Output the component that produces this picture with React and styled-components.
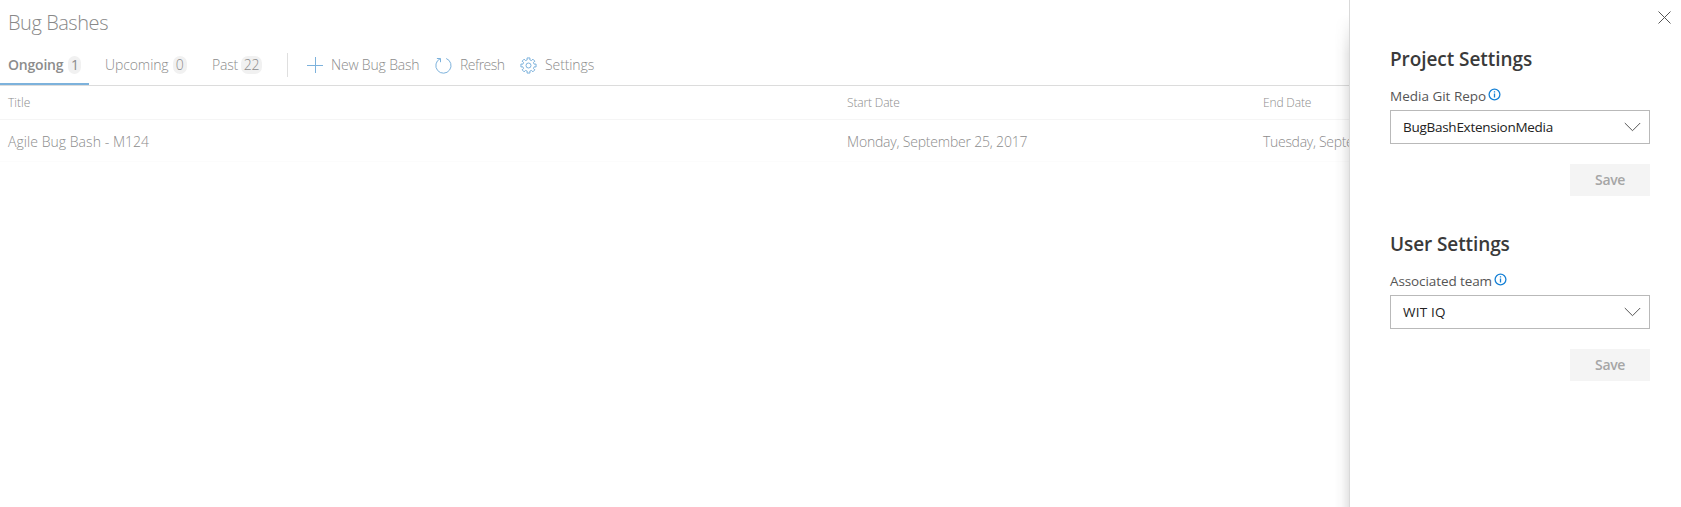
import React from "react";
import styled, { createGlobalStyle } from "styled-components";

const Global = createGlobalStyle`
  *, *::before, *::after { box-sizing: border-box; }
  html, body { margin: 0; background: #fff; overflow: hidden; }
  body { font-family: "Open Sans", "Noto Sans", sans-serif; font-size: 14px; }
`;

const Shell = styled.div`
  display: flex;
  width: 100%;
  height: 507px;
  overflow: hidden;
`;

const Hub = styled.main`
  flex: 1;
  min-width: 0;
  overflow: hidden;
  color: #8c8c8c;
`;

const Text = styled.span`
  display: block;
  font-size: ${(p) => p.$size || 14}px;
  font-weight: ${(p) => p.$weight || 300};
  letter-spacing: ${(p) => p.$track || 0}px;
  line-height: 20px;
  white-space: nowrap;
`;

const HubTitle = styled.h1`
  margin: 0;
  height: 48px;
  padding: 8px 0 0 8px;
  font-size: 20px;
  font-weight: 300;
  line-height: 30px;
  letter-spacing: -0.45px;
  color: #888;
`;

const Toolbar = styled.div`
  display: flex;
  height: 38px;
  border-bottom: 1px solid #dcdcdc;
`;

const Tab = styled.div`
  display: flex;
  align-items: center;
  gap: ${(p) => p.$gap}px;
  width: ${(p) => p.$width}px;
  padding: 0 0 ${(p) => (p.$active ? 2 : 3)}px ${(p) => (p.$active ? 8 : 16)}px;
  border-bottom: ${(p) => (p.$active ? "2px solid #7db2dc" : "0")};
`;

const Badge = styled.span`
  width: ${(p) => p.$width}px;
  height: 18px;
  border-radius: 7px;
  background: #f1f1f1;
  text-align: center;
  font-weight: ${(p) => (p.$bold ? 400 : 300)};
  line-height: 18px;
  letter-spacing: -0.3px;
`;

const Separator = styled.div`
  width: 1px;
  height: 24px;
  margin: 5px 19px 0 0;
  background: #dfdfdf;
`;

const Command = styled.div`
  display: flex;
  align-items: center;
  gap: 8px;
  width: ${(p) => p.$width}px;
  padding-bottom: 3px;
`;

const Icon = styled.svg`
  display: block;
  flex: none;
  fill: none;
  stroke: ${(p) => p.$color || "#7db2dc"};
  stroke-width: ${(p) => p.$stroke || 1};
`;

const Row = styled.div`
  display: grid;
  grid-template-columns: 839px 416px 400px;
  align-items: center;
  height: ${(p) => p.$height}px;
  padding: ${(p) => p.$top || 0}px 0 0 8px;
  border-bottom: 1px solid ${(p) => p.$line};
`;

const Panel = styled.aside`
  position: relative;
  width: 332px;
  flex: none;
  padding: 11px 31px 0 40px;
  border-left: 1px solid #d9d9d9;
  background: #fff;
  color: #333;
  &::before {
    content: "";
    position: absolute;
    top: 14px;
    bottom: -30px;
    left: -16px;
    width: 15px;
    background: linear-gradient(to right, rgba(0,0,0,0), rgba(0,0,0,0.025) 50%, rgba(0,0,0,0.1));
    mask-image: linear-gradient(to bottom, transparent, #000 40px);
  }
`;

const CloseRow = styled.div`
  display: flex;
  justify-content: flex-end;
  height: 33px;
  margin-right: -21px;
`;

const Group = styled.section`
  height: 185px;
`;

const Heading = styled.h2`
  margin: 0;
  height: 41px;
  font-size: 19px;
  font-weight: 600;
  line-height: 30px;
  letter-spacing: ${(p) => p.$track}px;
  white-space: nowrap;
  color: #3a3a3a;
`;

const Label = styled.div`
  display: flex;
  align-items: center;
  gap: 2px;
  height: 25px;
  padding-bottom: 3px;
  color: #555;
  svg { margin-bottom: 3px; }
`;

const Select = styled.div`
  display: flex;
  align-items: center;
  justify-content: space-between;
  height: 34px;
  padding: 0 8px 0 12px;
  border: 1px solid #b9b9b9;
  color: #222;
`;

const SaveButton = styled.button`
  display: block;
  width: 80px;
  height: 32px;
  margin: 20px 0 0 auto;
  padding: 0;
  border: 0;
  background: #f4f4f4;
  color: #a6a6a6;
  font: 600 14px/32px "Open Sans", "Noto Sans", sans-serif;
  letter-spacing: -0.4px;
`;

const PlusIcon = () => (
  <Icon width="16" height="16"><path d="M0 8.5H16M8.5 0V16" /></Icon>
);

const RefreshIcon = () => (
  <Icon width="17" height="17">
    <path d="M11.2 1.5A7.6 7.6 0 1 1 5.2 1.7M1.9 1.5H5.5V5.2" />
  </Icon>
);

const teeth = Array.from({ length: 8 }, (_, i) => {
  const at = (radius, deg) => {
    const a = ((i * 45 + deg) * Math.PI) / 180;
    return `${(8.5 + radius * Math.cos(a)).toFixed(2)} ${(8.5 + radius * Math.sin(a)).toFixed(2)}`;
  };
  return `${at(5.8, -13)}L${at(7.7, -11)}L${at(7.7, 11)}L${at(5.8, 13)}`;
}).join("L");

const GearIcon = () => (
  <Icon width="17" height="17">
    <path d={`M${teeth}Z`} />
    <circle cx="8.5" cy="8.5" r="2.5" />
  </Icon>
);

const InfoIcon = () => (
  <Icon width="13" height="13" $color="#1681d6" $stroke={1.3}>
    <circle cx="6.5" cy="6.5" r="5.4" />
    <path d="M6.5 5.5V9.5M6.5 3.3V4.5" />
  </Icon>
);

const ChevronIcon = () => (
  <Icon width="17" height="10" $color="#555"><path d="M.8 1L8.5 8.7L16.2 1" /></Icon>
);

const CloseIcon = () => (
  <Icon width="13" height="13" $color="#555"><path d="M.5 .5L12.5 12.5M12.5 .5L.5 12.5" /></Icon>
);

const SettingsGroup = ({ title, titleTrack, label, labelTrack, value, valueTrack }) => (
  <Group>
    <Heading $track={titleTrack}>{title}</Heading>
    <Label>
      <Text $weight={400} $size={13.5} $track={labelTrack}>{label}</Text>
      <InfoIcon />
    </Label>
    <Select>
      <Text $weight={400} $size={13.5} $track={valueTrack}>{value}</Text>
      <ChevronIcon />
    </Select>
    <SaveButton>Save</SaveButton>
  </Group>
);

export default function App() {
  return (
    <Shell>
      <Global />
      <Hub>
        <HubTitle>Bug Bashes</HubTitle>
        <Toolbar>
          <Tab $active $width={89} $gap={5}>
            <Text $weight={600} $track={-0.2}>Ongoing</Text>
            <Badge $width={13} $bold>1</Badge>
          </Tab>
          <Tab $width={107} $gap={4}>
            <Text $track={-0.1}>Upcoming</Text>
            <Badge $width={14}>0</Badge>
          </Tab>
          <Tab $width={91} $gap={3}>
            <Text $track={-0.2}>Past</Text>
            <Badge $width={21}>22</Badge>
          </Tab>
          <Separator />
          <Command $width={128}><PlusIcon /><Text $track={-0.17}>New Bug Bash</Text></Command>
          <Command $width={85}><RefreshIcon /><Text $track={-0.52}>Refresh</Text></Command>
          <Command $width={90}><GearIcon /><Text $track={-0.1}>Settings</Text></Command>
        </Toolbar>
        <Row $height={34} $line="#f5f5f5">
          <Text $size={12}>Title</Text>
          <Text $size={12} $track={-0.15}>Start Date</Text>
          <Text $size={12} $track={-0.15}>End Date</Text>
        </Row>
        <Row $height={42} $top={2} $line="#fcfcfc">
          <Text $track={0.05}>Agile Bug Bash - M124</Text>
          <Text $track={-0.2}>Monday, September 25, 2017</Text>
          <Text $track={-0.3}>Tuesday, September 26, 2017</Text>
        </Row>
      </Hub>
      <Panel>
        <CloseRow><CloseIcon /></CloseRow>
        <SettingsGroup title="Project Settings" titleTrack={-0.07} label="Media Git Repo" labelTrack={0} value="BugBashExtensionMedia" valueTrack={-0.27} />
        <SettingsGroup title="User Settings" titleTrack={-0.1} label="Associated team" labelTrack={-0.1} value="WIT IQ" valueTrack={0.2} />
      </Panel>
    </Shell>
  );
}
